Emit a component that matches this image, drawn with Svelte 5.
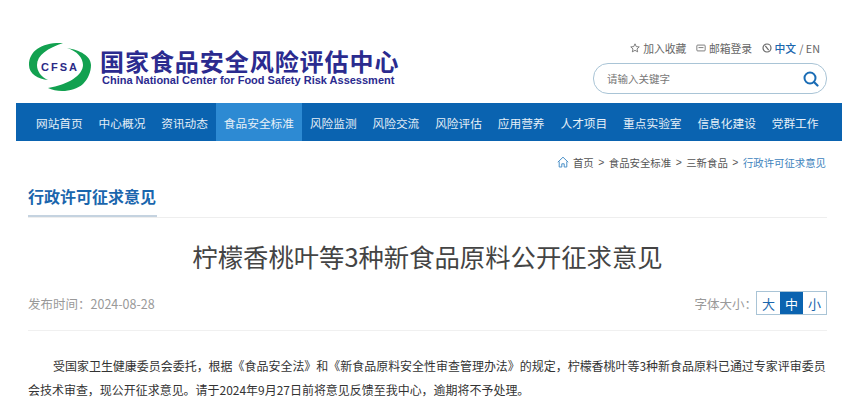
<script>
	const navItems = ['网站首页', '中心概况', '资讯动态', '食品安全标准', '风险监测', '风险交流', '风险评估', '应用营养', '人才项目', '重点实验室', '信息化建设', '党群工作'];
	const activeNav = '食品安全标准';
	const crumbs = ['首页', '食品安全标准', '三新食品'];
	const sizes = ['大', '中', '小'];
	let currentSize = $state('中');
</script>

<div class="page">
	<header class="top">
		<div class="logo">
			<svg class="mark" width="63" height="50" viewBox="0 0 63 50">
				<path d="M35 1 C15 0 1 8 1 23 C1 32 10 37 20 38 C13 35 9 29 9 23 C9 13 20 6 35 1 Z" fill="#12a150" />
				<path d="M39 6 C49 9 55 16 55 23 C55 33 40 43 20 46 C30 51 46 50 55 42 C60 37 63 30 63 23 C63 14 52 8 39 6 Z" fill="#12a150" />
				<text x="32" y="29" class="mark-text" text-anchor="middle">CFSA</text>
			</svg>
			<div class="logo-text">
				<div class="logo-cn">国家食品安全风险评估中心</div>
				<div class="logo-en">China National Center for Food Safety Risk Assessment</div>
			</div>
		</div>
		<div class="tools">
			<div class="links">
				<span class="link">
					<svg width="10" height="10" viewBox="0 0 12 12"><path d="M6 1l1.500 3.300 3.600.4-2.700 2.400.8 3.500L6 8.800l-3.200 1.800.8-3.500L.9 4.700l3.600-.4z" fill="none" stroke="#666" stroke-width="1" /></svg>
					加入收藏
				</span>
				<span class="link">
					<svg width="10" height="10" viewBox="0 0 12 12"><rect x="1" y="2.500" width="10" height="7" rx="1" fill="none" stroke="#666" /><path d="M3 5.500h6" stroke="#666" /></svg>
					邮箱登录
				</span>
				<span class="link">
					<svg width="10" height="10" viewBox="0 0 12 12"><circle cx="6" cy="6" r="4.800" fill="none" stroke="#666" stroke-width="1.400" /><path d="M4 3.500l4 5" stroke="#666" stroke-width="1.400" /></svg>
					<b class="lang">中文</b> / EN
				</span>
			</div>
			<div class="search">
				<span class="placeholder">请输入关键字</span>
				<svg width="16" height="16" viewBox="0 0 16 16"><circle cx="7" cy="7" r="5.500" fill="none" stroke="#1a6cb5" stroke-width="2" /><path d="M11 11l3.500 3.500" stroke="#1a6cb5" stroke-width="2.200" stroke-linecap="round" /></svg>
			</div>
		</div>
	</header>

	<nav class="nav">
		{#each navItems as item}
			<span class="nav-item" class:active={item === activeNav}>{item}</span>
		{/each}
	</nav>

	<main class="content">
		<div class="crumbs">
			<svg width="12" height="12" viewBox="0 0 12 12"><path d="M.8 6.200L6 1.200l5.200 5M2.200 5.500v5.500h2.600V7.800h2.400V11h2.600V5.500" fill="none" stroke="#4a90c8" stroke-width="1" /></svg>
			{#each crumbs as crumb}
				<span>{crumb}</span><span class="sep">&gt;</span>
			{/each}
			<span class="current">行政许可征求意见</span>
		</div>

		<div class="section-head">
			<h2>行政许可征求意见</h2>
		</div>

		<h1>柠檬香桃叶等3种新食品原料公开征求意见</h1>

		<div class="meta">
			<span class="date">发布时间：2024-08-28</span>
			<div class="size-picker">
				<span class="size-label">字体大小：</span>
				<div class="sizes">
					{#each sizes as size}
						<button type="button" class:on={size === currentSize} onclick={() => (currentSize = size)}>{size}</button>
					{/each}
				</div>
			</div>
		</div>

		<p class="body-text">受国家卫生健康委员会委托，根据《食品安全法》和《新食品原料安全性审查管理办法》的规定，柠檬香桃叶等3种新食品原料已通过专家评审委员会技术审查，现公开征求意见。请于2024年9月27日前将意见反馈至我中心，逾期将不予处理。</p>
	</main>
</div>

<style>
	:global(body) {
		background: #fff;
		overflow: hidden;
	}

	.page {
		width: 859px;
		height: 413px;
		overflow: hidden;
		font-family: "Noto Sans CJK SC", "Liberation Sans", sans-serif;
		color: #333;
	}

	.top {
		display: flex;
		justify-content: space-between;
		align-items: flex-start;
		height: 103px;
		padding: 42px 32px 0 28px;
		box-sizing: border-box;
	}

	.logo {
		display: flex;
		gap: 9px;
	}

	.mark {
		display: block;
	}

	.mark-text {
		font-family: "Liberation Sans", sans-serif;
		font-size: 11px;
		font-weight: 700;
		letter-spacing: 2px;
		fill: #2a2a86;
	}

	.logo-text {
		padding-top: 5px;
	}

	.logo-cn {
		font-size: 24px;
		line-height: 27px;
		font-weight: 700;
		letter-spacing: 0.950px;
		color: #2b2b8f;
		white-space: nowrap;
	}

	.logo-en {
		font-family: "Liberation Sans", sans-serif;
		font-size: 11px;
		line-height: 13px;
		font-weight: 700;
		color: #2b2b8f;
		padding-left: 2px;
		white-space: nowrap;
	}

	.tools {
		width: 234px;
		margin-top: -1px;
	}

	.links {
		display: flex;
		justify-content: flex-end;
		align-items: center;
		gap: 9.500px;
		height: 14px;
		font-size: 10.800px;
		line-height: 14px;
		color: #666;
		padding-right: 7px;
		margin-bottom: 8px;
	}

	.link {
		display: flex;
		align-items: center;
		gap: 3px;
	}

	.lang {
		font-weight: 500;
		color: #1a66ad;
	}

	.search {
		display: flex;
		justify-content: space-between;
		align-items: center;
		height: 31px;
		box-sizing: border-box;
		padding: 0 7px 0 13px;
		border: 1px solid #a9c4d6;
		border-radius: 15px;
	}

	.placeholder {
		font-size: 10.500px;
		color: #777;
	}

	.nav {
		display: flex;
		height: 38px;
		margin: 0 17px 0 16px;
		padding: 0 12px;
		background: #0a63b0;
	}

	.nav-item {
		display: flex;
		align-items: center;
		padding: 0 7.940px;
		font-size: 11.700px;
		color: #e6f0f8;
		white-space: nowrap;
	}

	.nav-item.active {
		background: #2d8ad3;
	}

	.content {
		padding: 0 32px 0 28px;
	}

	.crumbs {
		display: flex;
		justify-content: flex-end;
		align-items: center;
		gap: 3.500px;
		height: 42px;
		font-size: 10.400px;
		padding-right: 1px;
		color: #555;
	}

	.sep {
		font-family: "Liberation Sans", sans-serif;
		margin: 0 1px;
	}

	.current {
		color: #3d83bd;
	}

	.section-head {
		height: 34px;
		border-bottom: 1px solid #eeeeee;
	}

	h2 {
		display: inline-block;
		margin: 0;
		height: 34px;
		box-sizing: border-box;
		padding-right: 1px;
		border-bottom: 2px solid #c5d3e0;
		font-size: 16px;
		line-height: 26px;
		font-weight: 700;
		color: #1a66ad;
	}

	h1 {
		margin: 20px 0 0;
		text-align: center;
		font-size: 25.350px;
		line-height: 36px;
		font-weight: 400;
		color: #444;
	}

	.meta {
		display: flex;
		justify-content: space-between;
		align-items: center;
		height: 38px;
		margin-top: 10px;
		padding-bottom: 8px;
		border-bottom: 1px solid #f0f0f0;
		font-size: 12.500px;
		color: #999;
	}

	.size-picker {
		display: flex;
		align-items: center;
	}

	.size-label {
		margin-right: -1px;
	}

	.sizes {
		display: flex;
		border: 1px solid #a9c4d6;
	}

	.sizes button {
		width: 23px;
		height: 22px;
		padding: 0;
		border: 0;
		background: #fff;
		font: inherit;
		font-size: 13px;
		color: #1a66ad;
	}

	.sizes button.on {
		background: #0a63b0;
		color: #fff;
	}

	.body-text {
		margin: 23px 0 0;
		text-indent: 25px;
		font-size: 11.970px;
		line-height: 24px;
		color: #333;
	}
</style>
